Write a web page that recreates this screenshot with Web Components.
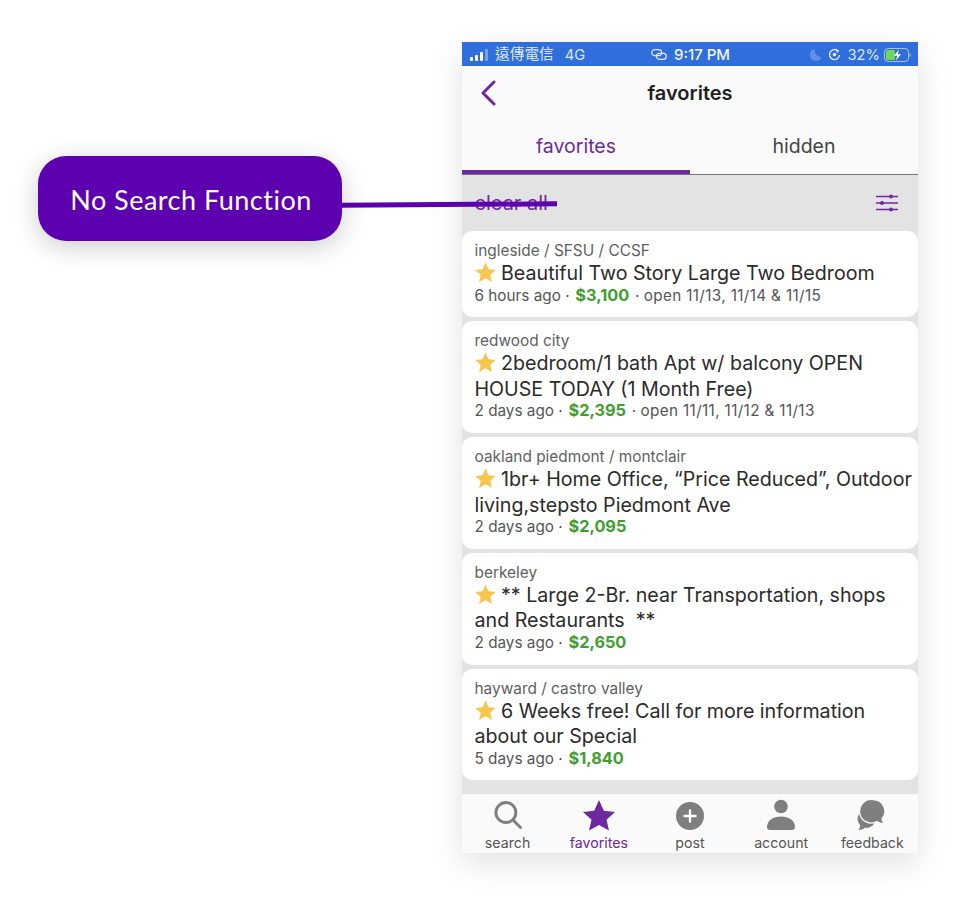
<!DOCTYPE html>
<html>
<head>
<meta charset="utf-8">
<title>favorites</title>
<style>
  html, body { margin: 0; padding: 0; background: #fff; }
  body { font-family: Inter, "Noto Sans CJK TC", sans-serif; }
</style>
</head>
<body>
<annotated-shot>
  <callout-label slot="note">No Search Function</callout-label>
  <phone-screen>
    <status-bar></status-bar>
    <nav-header>favorites</nav-header>
    <tab-strip></tab-strip>
    <filter-bar></filter-bar>
    <listing-card place="ingleside / SFSU / CCSF" age="6 hours ago" price="$3,100" open="open 11/13, 11/14 &amp; 11/15">Beautiful Two Story Large Two Bedroom</listing-card>
    <listing-card place="redwood city" age="2 days ago" price="$2,395" open="open 11/11, 11/12 &amp; 11/13">2bedroom/1 bath Apt w/ balcony OPEN HOUSE TODAY (1 Month Free)</listing-card>
    <listing-card place="oakland piedmont / montclair" age="2 days ago" price="$2,095">1br+ Home Office, “Price Reduced”, Outdoor living,stepsto Piedmont Ave</listing-card>
    <listing-card place="berkeley" age="2 days ago" price="$2,650">** Large 2-Br. near Transportation, shops and Restaurants&nbsp; **</listing-card>
    <listing-card place="hayward / castro valley" age="5 days ago" price="$1,840">6 Weeks free! Call for more information about our Special</listing-card>
    <bottom-tabs></bottom-tabs>
  </phone-screen>
</annotated-shot>

<script>
const STAR = "M12 1.5l3.1 7.1 7.7.7-5.8 5.1 1.7 7.6L12 18l-6.700 4 1.700-7.600-5.800-5.100 7.700-.700z";

class AnnotatedShot extends HTMLElement {
  constructor() {
    super();
    this.attachShadow({ mode: "open" }).innerHTML = `
      <style>
        :host { display: block; position: relative; width: 967px; height: 908px; overflow: hidden; padding: 42px 0 0 462px; box-sizing: border-box; }
        .line { position: absolute; left: 340px; top: 202px; width: 217px; height: 5px; background: #5c00b0; transform: rotate(-0.35deg); z-index: 2; }
        .note { position: absolute; left: 38px; top: 156px; z-index: 3; }
      </style>
      <div class="line"></div>
      <div class="note"><slot name="note"></slot></div>
      <slot></slot>
    `;
  }
}
customElements.define("annotated-shot", AnnotatedShot);

class CalloutLabel extends HTMLElement {
  constructor() {
    super();
    this.attachShadow({ mode: "open" }).innerHTML = `
      <style>
        :host { display: flex; align-items: center; justify-content: center; width: 304px; height: 85px; padding: 2px 0 0 2px; box-sizing: border-box; border-radius: 28px; background: #5c00b0; color: #fff; font: 400 27px Lato, sans-serif; letter-spacing: .5px; box-shadow: 0 6px 26px rgba(0,0,0,.2); }
      </style>
      <slot></slot>
    `;
  }
}
customElements.define("callout-label", CalloutLabel);

class PhoneScreen extends HTMLElement {
  constructor() {
    super();
    this.attachShadow({ mode: "open" }).innerHTML = `
      <style>
        :host { display: flex; flex-direction: column; width: 456px; height: 811px; background: #e3e3e3; box-shadow: 0 10px 30px rgba(0,0,0,.12); overflow: hidden; }
      </style>
      <slot></slot>
    `;
  }
}
customElements.define("phone-screen", PhoneScreen);

class StatusBar extends HTMLElement {
  constructor() {
    super();
    this.attachShadow({ mode: "open" }).innerHTML = `
      <style>
        :host { display: grid; grid-template-columns: 1fr auto 1fr; align-items: center; height: 24px; background: #2f6edb; color: #dfe8fa; font: 400 14.7px/16px Inter, "Noto Sans CJK TC", sans-serif; box-sizing: border-box; padding: 1px 7px 0 8px; }
        .l, .r { display: flex; align-items: center; }
        .r { justify-content: flex-end; }
        .c { display: flex; align-items: center; gap: 7px; font-weight: 500; font-size: 15px; color: #f2f6fe; }
        .op { margin: 0 11px 0 5px; height: 20px; line-height: 18px; }
        .t { padding-top: 1px; }
        svg { display: block; }
      </style>
      <div class="l">
        <svg width="20" height="12" viewBox="0 0 20 12"><rect x="0" y="8" width="3" height="4" rx="1" fill="#fff"/><rect x="5" y="6" width="3" height="6" rx="1" fill="#fff"/><rect x="10" y="3" width="3" height="9" rx="1" fill="#fff"/><rect x="15" y="0" width="3" height="12" rx="1" fill="#fff" opacity=".35"/></svg>
        <span class="op">遠傳電信</span><span class="t">4G</span>
      </div>
      <div class="c">
        <svg width="16" height="11" viewBox="0 0 16 11" fill="none" stroke="#e4ecfb" stroke-width="1.2"><rect x=".7" y=".7" width="10" height="6" rx="3"/><rect x="5.300" y="4.300" width="10" height="6" rx="3"/></svg>
        <span>9:17 PM</span>
      </div>
      <div class="r">
        <svg width="13" height="14" viewBox="0 0 13 14" style="margin-right:6px"><path d="M6 1a6 6 0 1 0 6.500 8A6.500 6.500 0 0 1 6 1z" fill="#5f8fe6"/></svg>
        <svg width="13" height="13" viewBox="0 0 13 13" fill="none" stroke="#e4ecfb" stroke-width="1.400" style="margin-right:7px"><path d="M11.500 7A5 5 0 1 1 9.800 2.800"/><path d="M8 1l3.200 1.700L9 5z" fill="#e4ecfb" stroke="none"/><circle cx="6.500" cy="6.500" r="1.800" fill="#e4ecfb" stroke="none"/></svg>
        <span class="t">32%</span>
        <svg width="27" height="14" viewBox="0 0 27 14" style="margin-left:4px"><rect x=".5" y=".5" width="24" height="13" rx="3.500" fill="none" stroke="#a9c3f0"/><rect x="2" y="2" width="9" height="10" rx="1.500" fill="#6fd75c"/><path d="M15 1.500L10 7.700h3.200L12 12.500l5-6.200h-3.200z" fill="#fff"/><path d="M25.500 5v4a2 2 0 0 0 1.200-2 2 2 0 0 0-1.200-2z" fill="#a9c3f0"/></svg>
      </div>
    `;
  }
}
customElements.define("status-bar", StatusBar);

class NavHeader extends HTMLElement {
  constructor() {
    super();
    this.attachShadow({ mode: "open" }).innerHTML = `
      <style>
        :host { display: flex; align-items: center; justify-content: center; position: relative; height: 53px; padding-top: 1px; box-sizing: border-box; background: #fafafa; color: #1f1f1f; font: 600 20px Inter, sans-serif; }
        svg { position: absolute; left: 17px; top: 14px; }
      </style>
      <svg width="20" height="26" viewBox="0 0 20 26" fill="none" stroke="#6d2aa0" stroke-width="3" stroke-linecap="round" stroke-linejoin="round"><path d="M15 2L4 13l11 11"/></svg>
      <slot></slot>
    `;
  }
}
customElements.define("nav-header", NavHeader);

class TabStrip extends HTMLElement {
  constructor() {
    super();
    this.attachShadow({ mode: "open" }).innerHTML = `
      <style>
        :host { display: grid; grid-template-columns: 1fr 1fr; height: 56px; background: #fafafa; font: 400 19.5px Inter, sans-serif; box-sizing: border-box; border-bottom: 1px solid #777; }
        div { display: flex; align-items: center; justify-content: center; padding: 2px 0 4px; box-sizing: border-box; color: #444; }
        .on { color: #6d2aa0; border-bottom: 4px solid #6d2aa0; padding-bottom: 0; }
      </style>
      <div class="on">favorites</div>
      <div>hidden</div>
    `;
  }
}
customElements.define("tab-strip", TabStrip);

class FilterBar extends HTMLElement {
  constructor() {
    super();
    this.attachShadow({ mode: "open" }).innerHTML = `
      <style>
        :host { display: flex; align-items: center; justify-content: space-between; height: 56px; padding: 0 20px 0 12.5px; box-sizing: border-box; background: #e3e3e3; color: #6d2aa0; font: 400 20px Inter, sans-serif; }
      </style>
      <span>clear all</span>
      <svg width="22" height="20" viewBox="0 0 22 20" fill="none" stroke="#6d2aa0" stroke-width="1.6"><path d="M0 3.500h22M0 10h22M0 16.500h22"/><circle cx="15" cy="3.500" r="2" fill="#6d2aa0" stroke="none"/><circle cx="6" cy="10" r="2" fill="#6d2aa0" stroke="none"/><circle cx="15" cy="16.500" r="2" fill="#6d2aa0" stroke="none"/></svg>
    `;
  }
}
customElements.define("filter-bar", FilterBar);

class ListingCard extends HTMLElement {
  constructor() {
    super();
    const open = this.getAttribute("open");
    this.attachShadow({ mode: "open" }).innerHTML = `
      <style>
        :host { display: block; background: #fff; border-radius: 10px; padding: 10px 0 12.75px 12.5px; margin-bottom: 4px; color: #2b2b2b; }
        .place { font: 400 15.4px/20px Inter, sans-serif; color: #5f5f5f; }
        .title { font: 400 19.65px/25.5px Inter, sans-serif; }
        .title svg { width: 23px; height: 23px; vertical-align: -4px; margin-right: 4px; margin-left: -.5px; }
        .meta { font: 400 15.3px/18px Inter, sans-serif; color: #555; margin-top: -1px; }
        .price { font-weight: 700; font-size: 16.3px; color: #3f9e2f; margin: 0 1.5px; }
        .open { letter-spacing: .35px; }
      </style>
      <div class="place">${this.getAttribute("place")}</div>
      <div class="title"><svg viewBox="0 0 24 24"><path d="${STAR}" fill="#f7c64f"/></svg><slot></slot></div>
      <div class="meta">${this.getAttribute("age")} · <span class="price">${this.getAttribute("price")}</span>${open ? ` · <span class="open">${open}</span>` : ""}</div>
    `;
  }
}
customElements.define("listing-card", ListingCard);

class BottomTabs extends HTMLElement {
  constructor() {
    super();
    const items = [
      ["search", `<circle cx="13.900" cy="13.500" r="10" fill="none" stroke="#7f7f7f" stroke-width="2.900"/><path d="M21.500 21.500l7 7" stroke="#7f7f7f" stroke-width="2.900" stroke-linecap="round"/>`],
      ["favorites", `<path d="M16 1l4.800 10.800 11.200 1.100-8.500 7.800 2.500 10.800L16 26l-10 5.500 2.500-10.800L0 12.900l11.200-1.100z" fill="#6d2aa0"/>`],
      ["post", `<circle cx="16" cy="17" r="14" fill="#7f7f7f"/><path d="M16 11.500v11M10.500 17h11" stroke="#fff" stroke-width="2.400" stroke-linecap="round"/>`],
      ["account", `<circle cx="16" cy="7.500" r="6.800" fill="#7f7f7f"/><path d="M2 28c0-6.500 6.500-10.500 14-10.500S30 21.500 30 28c0 2-1 3-3 3H5c-2 0-3-1-3-3z" fill="#7f7f7f"/>`],
      ["feedback", `<circle cx="10.500" cy="20" r="9" fill="#7f7f7f"/><path d="M4 24c.5 3-.5 5.500-1.500 7 3 0 5.500-1 7-3z" fill="#7f7f7f"/><path d="M17 .5a11.800 11.800 0 0 1 9 19.500c.2 2 1.500 4 3 5-3 0-6-.8-8-2.500A11.800 11.800 0 1 1 17 .5z" fill="#7f7f7f" stroke="#fafafa" stroke-width="1.300"/>`]
    ];
    this.attachShadow({ mode: "open" }).innerHTML = `
      <style>
        :host { display: grid; grid-template-columns: repeat(5, 1fr); height: 59px; margin-top: auto; background: #fafafa; padding: 0; box-sizing: border-box; font: 400 14.2px Inter, sans-serif; color: #555; }
        div { display: flex; flex-direction: column; align-items: center; padding-top: 5px; }
        svg { width: 32px; height: 32px; display: block; }
        span { line-height: 17px; margin-top: 3px; }
        .on { color: #6d2aa0; }
      </style>
      ${items.map(([name, d]) => `<div class="${name === "favorites" ? "on" : ""}"><svg viewBox="0 0 32 32">${d}</svg><span>${name}</span></div>`).join("")}
    `;
  }
}
customElements.define("bottom-tabs", BottomTabs);
</script>
</body>
</html>
